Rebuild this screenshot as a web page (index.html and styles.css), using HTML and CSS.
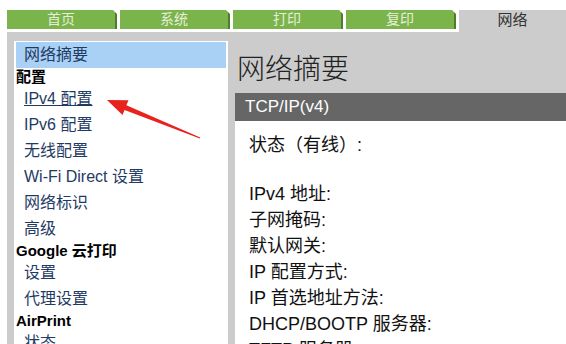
FILE: index.html
```html
<!DOCTYPE html>
<html lang="zh-CN">
<head>
<meta charset="utf-8">
<title>网络摘要</title>
<link rel="stylesheet" href="styles.css">
</head>
<body>
<div class="page">
  <nav class="tabs">
    <a class="tab">首页</a>
    <a class="tab">系统</a>
    <a class="tab">打印</a>
    <a class="tab">复印</a>
    <a class="tab active">网络</a>
  </nav>
  <div class="frame">
    <aside class="sidebar">
      <div class="item current">网络摘要</div>
      <div class="heading">配置</div>
      <a class="item link underline">IPv4 配置</a>
      <a class="item link">IPv6 配置</a>
      <a class="item link">无线配置</a>
      <a class="item link">Wi-Fi Direct 设置</a>
      <a class="item link">网络标识</a>
      <a class="item link">高级</a>
      <div class="heading">Google 云打印</div>
      <a class="item link">设置</a>
      <a class="item link">代理设置</a>
      <div class="heading">AirPrint</div>
      <a class="item link">状态</a>
    </aside>
    <main class="main">
      <h1 class="title">网络摘要</h1>
      <div class="bar">TCP/IP(v4)</div>
      <div class="panel">
        <div class="row status">状态（有线）:</div>
        <div class="row">IPv4 地址:</div>
        <div class="row">子网掩码:</div>
        <div class="row">默认网关:</div>
        <div class="row">IP 配置方式:</div>
        <div class="row">IP 首选地址方法:</div>
        <div class="row">DHCP/BOOTP 服务器:</div>
        <div class="row">TFTP 服务器:</div>
      </div>
    </main>
  </div>
</div>
<svg class="arrow" width="566" height="344" viewBox="0 0 566 344">
  <polygon points="107,100 128.5,100.2 126.4,105.3 200.2,137.5 199.8,138.5 124.6,109.9 122.5,115" fill="#e8221c"/>
</svg>
</body>
</html>
```
FILE: styles.css
```css
html, body {
  margin: 0;
  padding: 0;
  background: #ffffff;
  overflow: hidden;
  width: 566px;
  height: 344px;
}
body {
  position: relative;
  font-family: "Liberation Sans", "Noto Sans CJK SC", sans-serif;
}
.page {
  padding: 10px 0 0 7px;
}
.tabs {
  display: flex;
  align-items: flex-start;
  gap: 3px;
  height: 22px;
}
.tab {
  position: relative;
  box-sizing: border-box;
  width: 110px;
  height: 19px;
  line-height: 19px;
  text-align: center;
  font-size: 14px;
  color: #e4efd9;
  background: #7cb44c;
  border-right: 2px solid #4e7d2c;
}
.tab::after {
  content: "";
  position: absolute;
  top: 0;
  right: -2px;
  width: 0;
  height: 0;
  border-top: 4px solid #ffffff;
  border-left: 4px solid transparent;
}
.tab.active {
  flex: 1;
  height: 22px;
  line-height: 20px;
  font-size: 15px;
  color: #333333;
  background: #cccccc;
  border-right: none;
}
.tab.active::after {
  display: none;
}
.frame {
  display: flex;
  gap: 7px;
  background: #cccccc;
  padding: 9px 0 0 7px;
  height: 320px;
}
.sidebar {
  flex: none;
  width: 210px;
  background: #ffffff;
  padding: 1px 2px;
  font-size: 16px;
}
.item {
  display: block;
  height: 26px;
  line-height: 26px;
  padding-left: 8px;
  color: #1f3b64;
  text-decoration: none;
  white-space: nowrap;
}
.item.current {
  background: #a9d0f5;
}
.item.underline {
  text-decoration: underline;
}
.heading {
  height: 18px;
  line-height: 18px;
  font-size: 15px;
  font-weight: bold;
  color: #000000;
  white-space: nowrap;
}
.main {
  flex: 1;
  min-width: 0;
}
.title {
  margin: 0;
  padding: 1px 0 0 2px;
  height: 51px;
  line-height: 51px;
  font-size: 28px;
  font-weight: 300;
  color: #222222;
  font-family: "Noto Sans CJK SC", sans-serif;
}
.bar {
  height: 28px;
  line-height: 28px;
  padding-left: 10px;
  background: #666666;
  color: #ffffff;
  font-size: 17px;
}
.panel {
  background: #ffffff;
  padding: 11px 0 0 14px;
  height: 300px;
  font-size: 18px;
  color: #111111;
}
.row {
  height: 26px;
  line-height: 26px;
  white-space: nowrap;
}
.row.status {
  margin-bottom: 23px;
}
.arrow {
  position: absolute;
  top: 0;
  left: 0;
  pointer-events: none;
}
```
